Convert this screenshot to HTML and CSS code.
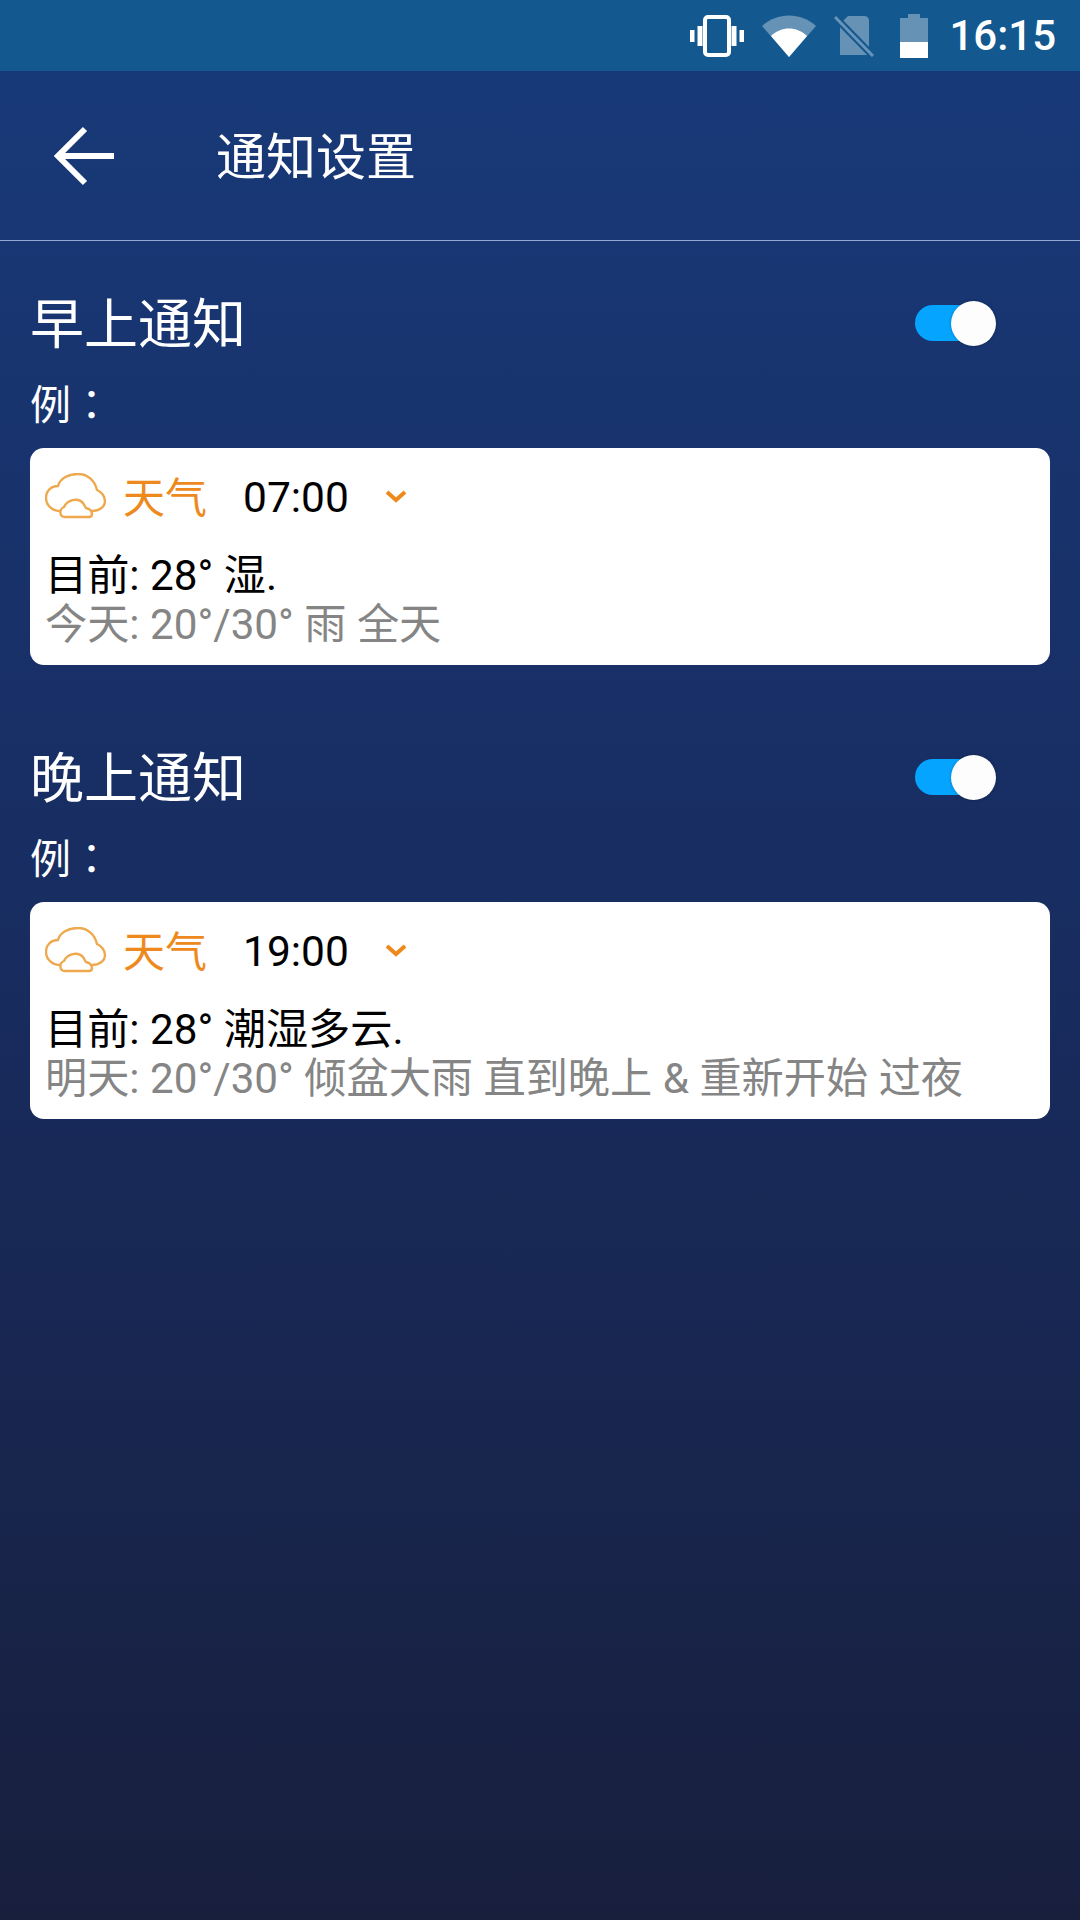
FILE: index.html
```html
<!DOCTYPE html>
<html lang="zh">
<head>
    <meta charset="UTF-8">
    <meta name="viewport" content="width=device-width, initial-scale=1.0">
    <title>通知设置</title>
    <link rel="stylesheet" href="styles.css">
</head>
<body>

<div class="status-bar">
    <svg class="icon-vibrate" width="54" height="42" viewBox="0 0 54 42">
        <rect x="15" y="2" width="24" height="38" rx="3" fill="none" stroke="#fff" stroke-width="4"/>
        <rect x="7.5" y="11" width="5" height="20" fill="#fff"/>
        <rect x="41.5" y="11" width="5" height="20" fill="#fff"/>
        <rect x="0" y="15" width="4.5" height="12" fill="#fff"/>
        <rect x="49.5" y="15" width="4.5" height="12" fill="#fff"/>
    </svg>
    <svg class="icon-wifi" width="54" height="42" viewBox="0 0 54 42">
        <path d="M0 11 C15 -3 39 -3 54 11 L27 42 Z" fill="#fff" fill-opacity="0.35"/>
        <path d="M9 21 C19 11 35 11 45 21 L27 42 Z" fill="#fff"/>
    </svg>
    <svg class="icon-nosim" width="40" height="42" viewBox="0 0 40 42">
        <path d="M14 1 H30 Q35 1 35 6 V40 H6 V9 Z" fill="#fff" fill-opacity="0.35"/>
        <path d="M1 2 L39 41" stroke="#13588e" stroke-width="7"/>
        <path d="M1 2 L39 41" stroke="#6a94b8" stroke-width="3"/>
    </svg>
    <svg class="icon-battery" width="28" height="44" viewBox="0 0 28 44">
        <path d="M8 0 H20 V4 H28 V44 H0 V4 H8 Z" fill="#fff" fill-opacity="0.35"/>
        <rect x="0" y="28" width="28" height="16" fill="#fff"/>
    </svg>
    <span class="clock">16:15</span>
</div>

<div class="app-bar">
    <svg class="back" width="62" height="60" viewBox="0 0 62 60">
        <path d="M60 30 H4 M31 3 L4 30 L31 57" fill="none" stroke="#fff" stroke-width="6"/>
    </svg>
    <span class="app-title">通知设置</span>
</div>

<section class="block">
    <div class="block-head">
        <span class="block-title">早上通知</span>
        <div class="switch"><div class="knob"></div></div>
    </div>
    <div class="example">例<span class="colon" lang="zh-TW">：</span></div>
    <div class="card">
        <div class="card-top">
            <svg class="cloud" width="62" height="46" viewBox="0 0 62 46">
                <path d="M18 38 C6 39 1 31 1 25 C1 18 6 13 13 13 C15 5 24 1 33 1 C43 1 50 8 52 17 C57 19 60 24 60 28 C60 34 54 38 47 38" fill="none" stroke="#eea94f" stroke-width="2.4"/>
                <path d="M20 44 C14 44 14 36 19 34 C22 27 33 24 38 30 C40 33 40 34 41 35 C45 36 47 38 47 41 C47 43 46 44 44 44 Z" fill="#fff" stroke="#eea94f" stroke-width="2.4"/>
            </svg>
            <span class="brand">天气</span>
            <span class="time">07:00</span>
            <svg class="chevron" width="22" height="14" viewBox="0 0 22 14">
                <path d="M2 3 L11 11 L20 3" fill="none" stroke="#ee8a1d" stroke-width="4"/>
            </svg>
        </div>
        <div class="now">目前: 28° 湿.</div>
        <div class="later">今天: 20°/30° 雨 全天</div>
    </div>
</section>

<section class="block">
    <div class="block-head">
        <span class="block-title">晚上通知</span>
        <div class="switch"><div class="knob"></div></div>
    </div>
    <div class="example">例<span class="colon" lang="zh-TW">：</span></div>
    <div class="card">
        <div class="card-top">
            <svg class="cloud" width="62" height="46" viewBox="0 0 62 46">
                <path d="M18 38 C6 39 1 31 1 25 C1 18 6 13 13 13 C15 5 24 1 33 1 C43 1 50 8 52 17 C57 19 60 24 60 28 C60 34 54 38 47 38" fill="none" stroke="#eea94f" stroke-width="2.4"/>
                <path d="M20 44 C14 44 14 36 19 34 C22 27 33 24 38 30 C40 33 40 34 41 35 C45 36 47 38 47 41 C47 43 46 44 44 44 Z" fill="#fff" stroke="#eea94f" stroke-width="2.4"/>
            </svg>
            <span class="brand">天气</span>
            <span class="time">19:00</span>
            <svg class="chevron" width="22" height="14" viewBox="0 0 22 14">
                <path d="M2 3 L11 11 L20 3" fill="none" stroke="#ee8a1d" stroke-width="4"/>
            </svg>
        </div>
        <div class="now">目前: 28° 潮湿多云.</div>
        <div class="later">明天: 20°/30° 倾盆大雨 直到晚上 &amp; 重新开始 过夜</div>
    </div>
</section>

</body>
</html>
```

FILE: styles.css
```css
* {
    box-sizing: border-box;
}
body {
    margin: 0;
    width: 1080px;
    height: 1920px;
    overflow: hidden;
    font-family: Roboto, "Noto Sans CJK SC", sans-serif;
    color: #fff;
    background: linear-gradient(#183a7a 0%, #182c5f 50%, #181f3d 100%);
}
.status-bar {
    height: 71px;
    background-color: #13588e;
    display: flex;
    align-items: center;
    justify-content: flex-end;
    padding-right: 24px;
}
.icon-vibrate {
    margin-right: 18px;
}
.icon-wifi {
    margin-right: 18px;
}
.icon-nosim {
    margin-right: 26px;
}
.icon-battery {
    margin-right: 21px;
}
.clock {
    font-size: 42px;
    font-weight: 500;
}
.app-bar {
    height: 170px;
    border-bottom: 1px solid #94a9d4;
    display: flex;
    align-items: center;
    padding-left: 54px;
}
.app-title {
    font-size: 50px;
    margin-left: 100px;
    margin-bottom: 5px;
}
.block {
    padding: 0 30px;
    margin-bottom: 30px;
}
.block-head {
    height: 134px;
    padding-top: 30px;
    display: flex;
    align-items: center;
    justify-content: space-between;
}
.block-title {
    font-size: 54px;
    margin-bottom: 5px;
}
.switch {
    width: 80px;
    height: 36px;
    margin-right: 55px;
    border-radius: 18px;
    background-color: #05a5ff;
    position: relative;
}
.knob {
    position: absolute;
    right: -1px;
    top: -4px;
    width: 45px;
    height: 45px;
    border-radius: 50%;
    background-color: #fdfdfd;
    box-shadow: 0 0 3px rgba(0, 0, 0, 0.3);
}
.example {
    font-size: 41px;
    height: 73px;
    line-height: 54px;
}
.colon {
    font-family: "Noto Sans CJK TC", sans-serif;
}
.card {
    height: 217px;
    background-color: #fff;
    border-radius: 14px;
    padding: 0 16px 0 15px;
}
.card-top {
    height: 95px;
    margin-bottom: 8px;
    display: flex;
    align-items: center;
}
.brand {
    font-size: 42px;
    color: #ee8a1d;
    margin-left: 16px;
    margin-bottom: 2px;
}
.time {
    font-size: 42.5px;
    color: #000;
    margin-left: 36px;
    margin-top: 4px;
}
.chevron {
    margin-left: 36px;
}
.now, .later {
    font-size: 42.2px;
    line-height: 49px;
}
.now {
    color: #000;
}
.later {
    color: #858585;
}
```
